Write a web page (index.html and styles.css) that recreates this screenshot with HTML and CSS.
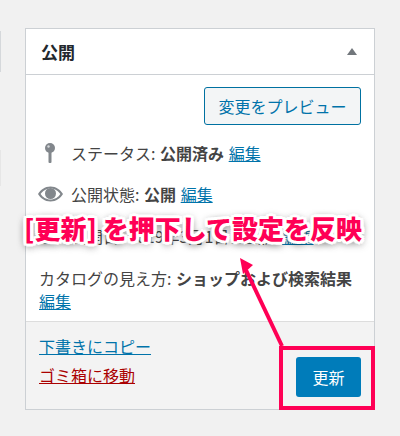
FILE: index.html
```html
<!DOCTYPE html>
<html lang="ja">
<head>
    <meta charset="UTF-8">
    <title>公開</title>
    <link rel="stylesheet" href="styles.css">
</head>
<body>
    <div class="edge-tab edge-top"></div>
    <div class="edge-tab edge-bottom"></div>
    <div class="publish-box">
        <div class="box-header">
            <h2>公開</h2>
            <span class="toggle-arrow"></span>
        </div>
        <div class="box-body">
            <div class="preview-row">
                <a class="preview-btn" href="#">変更をプレビュー</a>
            </div>
            <div class="misc-row row-status">
                <svg class="row-icon" viewBox="0 0 34 20"><circle cx="13" cy="5" r="5" fill="#82878c"/><rect x="11.500" y="8" width="3" height="12" rx="1" fill="#82878c"/><circle cx="11.500" cy="3.500" r="1.200" fill="#d5d8db"/></svg>
                <span>ステータス: <b>公開済み</b> <a href="#">編集</a></span>
            </div>
            <div class="misc-row row-visibility">
                <svg class="row-icon" viewBox="0 0 34 20"><path fill-rule="evenodd" d="M13.500 2.500c5.600 0 10 3.300 12.500 7.500-2.500 4.200-6.900 7.500-12.500 7.500S3.500 14.200 1 10c2.500-4.200 6.900-7.500 12.500-7.500zm0 2C9 4.500 5.600 7 3.600 10c2 3 5.400 5.500 9.900 5.500s7.900-2.500 9.900-5.500c-2-3-5.400-5.500-9.900-5.500z" fill="#82878c"/><circle cx="13.500" cy="9.500" r="5.500" fill="#82878c"/></svg>
                <span>公開状態: <b>公開</b> <a href="#">編集</a></span>
            </div>
            <div class="misc-row row-date">
                <svg class="row-icon" viewBox="0 0 34 20"><path fill-rule="evenodd" d="M3 2h20v16H3zm2 5v9h16V7z" fill="#82878c"/></svg>
                <span>公開日: 2019年3月1日に公開 <a href="#">編集</a></span>
            </div>
            <div class="misc-row row-catalog">
                <span>カタログの見え方: <b>ショップおよび検索結果</b> <a href="#">編集</a></span>
            </div>
        </div>
        <div class="box-footer">
            <div class="footer-links">
                <a href="#">下書きにコピー</a>
                <a class="trash-link" href="#">ゴミ箱に移動</a>
            </div>
            <a class="update-btn" href="#">更新</a>
        </div>
    </div>

    <!-- annotation layer -->
    <div class="callout">[更新] を押下して設定を反映</div>
    <svg class="arrow" width="400" height="436" viewBox="0 0 400 436">
        <path d="M282 346L246 270" stroke="#ff0055" stroke-width="4" fill="none"/>
        <path d="M240 258L253 265L243 274z" fill="#ff0055"/>
    </svg>
    <div class="highlight"></div>
</body>
</html>
```
FILE: styles.css
```css
body {
    margin: 0;
    width: 400px;
    height: 436px;
    position: relative;
    overflow: hidden;
    background: #f1f1f1;
    font-family: "Noto Sans CJK JP", "Liberation Sans", sans-serif;
    font-size: 16px;
    color: #444;
}
a {
    color: #0073aa;
}
.edge-tab {
    position: absolute;
    left: 0;
    width: 1px;
}
.edge-top {
    top: 31px;
    height: 41px;
    background: #d5d8db;
}
.edge-bottom {
    top: 150px;
    height: 36px;
    background: #e6e6e6;
}
.publish-box {
    position: absolute;
    top: 28px;
    left: 25px;
    width: 348px;
    height: 380px;
    display: flex;
    flex-direction: column;
    background: #fff;
    border: 1px solid #ccd0d4;
}
.box-header {
    display: flex;
    align-items: center;
    justify-content: space-between;
    height: 45px;
    padding: 0 17px 0 15px;
    border-bottom: 1px solid #ccd0d4;
}
.box-header h2 {
    margin: 0;
    font-size: 17px;
    font-weight: 700;
    color: #23282d;
}
.toggle-arrow {
    border-left: 5px solid transparent;
    border-right: 5px solid transparent;
    border-bottom: 7px solid #72777c;
}
.box-body {
    flex: 1;
    padding: 12px 13px 0 13px;
}
.preview-row {
    display: flex;
    justify-content: flex-end;
    margin-bottom: 17px;
}
.preview-btn {
    width: 155px;
    height: 36px;
    line-height: 36px;
    text-align: center;
    text-decoration: none;
    background: #f3f5f6;
    border: 1px solid #0071a1;
    border-radius: 3px;
}
.misc-row {
    display: flex;
    align-items: center;
    line-height: 22px;
    white-space: nowrap;
    word-spacing: 1px;
}
.row-status,
.row-visibility,
.row-date {
    height: 22px;
}
.row-status {
    margin-bottom: 19px;
}
.row-visibility {
    margin-bottom: 20px;
}
.row-date {
    margin-bottom: 20px;
}
.row-catalog {
    white-space: normal;
    width: 322px;
    line-height: 23px;
}
.row-icon {
    flex: none;
    width: 34px;
    height: 20px;
    margin-left: -2px;
}
.box-footer {
    display: flex;
    justify-content: space-between;
    height: 87px;
    padding: 0 13px;
    background: #f3f3f3;
    border-top: 1px solid #ddd;
}
.footer-links {
    display: flex;
    flex-direction: column;
    gap: 7px;
    padding-top: 13px;
    line-height: 22px;
}
.trash-link {
    color: #a00;
}
.update-btn {
    align-self: flex-start;
    width: 65px;
    height: 40px;
    margin-top: 35px;
    line-height: 40px;
    text-align: center;
    text-decoration: none;
    color: #fff;
    background: #007cba;
    border-radius: 3px;
}
.callout {
    position: absolute;
    top: 208px;
    left: 24px;
    font-size: 26px;
    line-height: 40px;
    font-weight: 900;
    white-space: nowrap;
    color: #ff0055;
    text-shadow: 3px 0 0 #fff, -3px 0 0 #fff, 0 3px 0 #fff, 0 -3px 0 #fff, 2px 2px 0 #fff, -2px 2px 0 #fff, 2px -2px 0 #fff, -2px -2px 0 #fff, 3px 2px 1px #fff, -3px 2px 1px #fff, 3px -2px 1px #fff, -3px -2px 1px #fff, 0 2px 9px rgba(0, 0, 0, 0.6), 0 2px 9px rgba(0, 0, 0, 0.4);
}
.arrow {
    position: absolute;
    top: 0;
    left: 0;
}
.highlight {
    position: absolute;
    top: 346px;
    left: 279px;
    width: 88px;
    height: 56px;
    border: 4px solid #ff0055;
}
```
